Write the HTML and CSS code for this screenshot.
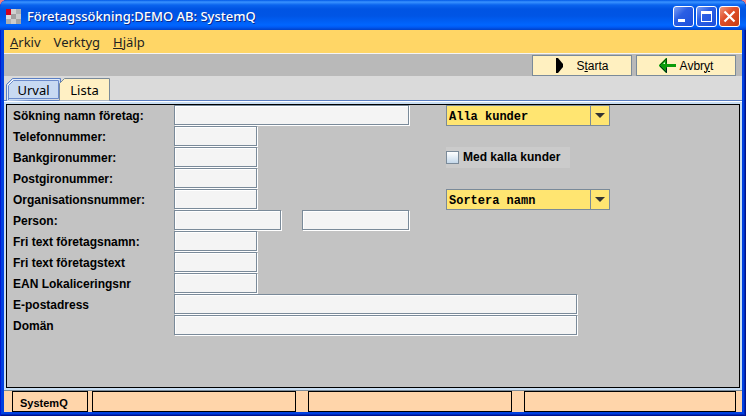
FILE: index.html
```html
<!DOCTYPE html>
<html lang="sv">
<head>
  <meta charset="UTF-8">
  <title>Företagssökning:DEMO AB: SystemQ</title>
  <link rel="stylesheet" href="styles.css">
</head>
<body>
  <div class="window">

    <header class="titlebar">
      <svg class="app-icon" width="15" height="15" viewBox="0 0 15 15" shape-rendering="crispEdges">
        <rect width="15" height="15" fill="#b4b4b4"/>
        <rect x="5" width="5" height="5" fill="#d0d0d0"/>
        <rect x="10" width="5" height="5" fill="#b0b0b0"/>
        <rect y="5" width="5" height="5" fill="#dcdcdc"/>
        <rect x="5" y="5" width="5" height="5" fill="#a0a0a0"/>
        <rect x="10" y="5" width="5" height="5" fill="#c8c8c8"/>
        <rect y="10" width="5" height="5" fill="#b0b0b0"/>
        <rect x="5" y="10" width="5" height="5" fill="#cccccc"/>
        <rect x="10" y="10" width="5" height="5" fill="#a4a4a4"/>
        <rect width="5" height="6" fill="#d00020"/>
      </svg>
      <h1>Företagssökning:DEMO AB: SystemQ</h1>
      <button type="button" class="win-button" aria-label="Minimera">
        <svg width="19" height="19" viewBox="0 0 19 19" shape-rendering="crispEdges"><rect x="4" y="12" width="7" height="3" fill="#fff"/></svg>
      </button>
      <button type="button" class="win-button" aria-label="Maximera">
        <svg width="19" height="19" viewBox="0 0 19 19" shape-rendering="crispEdges"><path d="M4 4h11v11H4zM5 7v7h9V7z" fill="#fff" fill-rule="evenodd"/></svg>
      </button>
      <button type="button" class="win-button close" aria-label="Stäng">
        <svg width="19" height="19" viewBox="0 0 19 19"><path d="M4.500 4.500l10 10M14.500 4.500l-10 10" stroke="#fff" stroke-width="2.2"/></svg>
      </button>
    </header>

    <nav class="menubar">
      <a href="#"><u>A</u>rkiv</a>
      <a href="#">Verktyg</a>
      <a href="#"><u>H</u>jälp</a>
    </nav>

    <div class="toolbar">
      <button type="button" class="tool-button">
        <svg width="17" height="15" viewBox="0 0 17 15"><path d="M1 0h2l5 6v3l-5 6H1z" fill="#000"/></svg>
        <span>S<u>t</u>arta</span>
      </button>
      <button type="button" class="tool-button">
        <svg width="17" height="15" viewBox="0 0 17 15"><path d="M7 0h1v6h9v3H8v6H7L0 8V7z" fill="#0a9b0a"/><path d="M7.500.5v5M7 1L1 7" stroke="#064a06" fill="none"/><path d="M1 8l6.500 6.500V9.500" stroke="#022" fill="none"/><path d="M4 6l2-2v2z" fill="#d8ffd8"/></svg>
        <span>Avbr<u>y</u>t</span>
      </button>
    </div>

    <div class="tabs" role="tablist">
      <button type="button" class="tab active" role="tab">
        <svg width="55" height="23" viewBox="0 0 55 23"><path d="M.5 23V6.500L6.500.5H54.500V21" fill="#c8daf2" stroke="#5b7fc4"/><path d="M2 22V7L7 2H53" fill="none" stroke="#fff"/><path d="M2.500 22V7.500L7.500 2.500H52.500V20.500H2.500" fill="none" stroke="#6b8bcb"/></svg>
        <span>Urval</span>
      </button>
      <button type="button" class="tab" role="tab">
        <svg width="51" height="23" viewBox="0 0 51 23"><path d="M.5 22.500V5.500L5.500.5H50.500V22.500" fill="#fff0c4" stroke="#7a8a99"/></svg>
        <span>Lista</span>
      </button>
    </div>

    <main class="content">
      <form class="search">
        <label for="namn">Sökning namn företag:</label>
        <input type="text" id="namn" class="field medium">
        <div class="combo">
          <select aria-label="Kundurval"><option>Alla kunder</option></select>
          <svg width="10" height="5" viewBox="0 0 10 5"><path d="M0 0h10L5 5z" fill="#333"/></svg>
        </div>

        <label for="telefon">Telefonnummer:</label>
        <input type="text" id="telefon" class="field short">

        <label for="bankgiro">Bankgironummer:</label>
        <input type="text" id="bankgiro" class="field short">
        <label class="check"><input type="checkbox">Med kalla kunder</label>

        <label for="postgiro">Postgironummer:</label>
        <input type="text" id="postgiro" class="field short">

        <label for="orgnr">Organisationsnummer:</label>
        <input type="text" id="orgnr" class="field short">
        <div class="combo">
          <select aria-label="Sortering"><option>Sortera namn</option></select>
          <svg width="10" height="5" viewBox="0 0 10 5"><path d="M0 0h10L5 5z" fill="#333"/></svg>
        </div>

        <label for="person">Person:</label>
        <div class="person">
          <input type="text" id="person" class="field">
          <input type="text" class="field" aria-label="Efternamn">
        </div>

        <label for="fritextnamn">Fri text företagsnamn:</label>
        <input type="text" id="fritextnamn" class="field short">

        <label for="fritext">Fri text företagstext</label>
        <input type="text" id="fritext" class="field short">

        <label for="ean">EAN Lokaliceringsnr</label>
        <input type="text" id="ean" class="field short">

        <label for="epost">E-postadress</label>
        <input type="text" id="epost" class="field long">

        <label for="doman">Domän</label>
        <input type="text" id="doman" class="field long">
      </form>
    </main>

    <footer class="statusbar">
      <div class="status name">SystemQ</div>
      <div class="status"></div>
      <div class="status"></div>
      <div class="status last"></div>
    </footer>

  </div>
</body>
</html>
```
FILE: styles.css
```css
* {
  box-sizing: border-box;
}

body {
  margin: 0;
  background: #f08080;
  font-family: "Liberation Sans", Arial, sans-serif;
  font-size: 12px;
  color: #000;
}

button, input, select {
  margin: 0;
  padding: 0;
  font: inherit;
  color: inherit;
}

.window {
  display: flex;
  flex-direction: column;
  min-height: 100vh;
  padding: 0 4px 4px;
  border-radius: 7px 7px 0 0;
  background: #0040e0;
  box-shadow: inset 1px 0 #0019cf, inset -1px -1px #00138c, inset -2px -2px #0029b8;
}

/* title bar */
.titlebar {
  display: flex;
  align-items: center;
  gap: 2px;
  height: 30px;
  margin: 0 -4px;
  padding: 2px 6px 0;
  border-radius: 7px 7px 0 0;
  background: linear-gradient(#0058e6 0, #3a93ff 2px, #0a64ee 5px, #0054e3 9px, #0055e5 16px, #0066ff 25px, #005bf5 27px, #0040c8 30px);
}

.titlebar h1 {
  flex: 1;
  margin: 0 0 0 4px;
  font-family: "Noto Sans", sans-serif;
  font-size: 13px;
  font-weight: 500;
  line-height: 20px;
  color: #fff;
  text-shadow: 1px 1px #0a2a8c;
}

.win-button {
  width: 21px;
  height: 21px;
  border: 1px solid #fff;
  border-radius: 3px;
  background: linear-gradient(135deg, #7c9ff4, #2a5ee4 40%, #1c4fdc);
}

.win-button svg {
  display: block;
}

.win-button.close {
  background: linear-gradient(135deg, #f0987c, #e0502c 40%, #c83c10);
}

/* menu */
.menubar {
  display: flex;
  gap: 13px;
  height: 24px;
  padding-left: 6px;
  border-bottom: 1px solid #f4f4f4;
  background: #ffd666;
  font-family: "Noto Sans", sans-serif;
  font-size: 13px;
  line-height: 24px;
}

.menubar a {
  color: #222;
  text-decoration: none;
}

/* toolbar */
.toolbar {
  display: flex;
  justify-content: flex-end;
  gap: 4px;
  height: 22px;
  padding: 1px 6px 0 0;
  background: #b9b9b9;
}

.tool-button {
  display: flex;
  align-items: center;
  justify-content: center;
  gap: 4px;
  width: 100px;
  height: 21px;
  border: 1px solid #7a8a99;
  background: #fff0c0;
}

/* tabs */
.tabs {
  display: flex;
  height: 25px;
  padding: 2px 0 0 2px;
  border-bottom: 1px solid #5b7fc4;
  background: #dadada;
}

.tab {
  display: grid;
  place-items: center;
  border: 0;
  background: none;
  font-family: "Noto Sans", sans-serif;
  font-size: 13px;
}

.tab svg, .tab span {
  grid-area: 1 / 1;
}

.tab + .tab {
  margin-left: -2px;
}

.tab svg {
  display: block;
}

/* search form */
.content {
  display: flex;
  flex: 1;
  padding: 2px;
  border-top: 1px solid #fff;
  border-bottom: 1px solid #7a8a99;
  background: #c8ddf2;
}

.search {
  display: grid;
  flex: 1;
  grid-template-columns: 161px 272px 1fr;
  grid-auto-rows: 21px;
  border: 1px solid #000;
  padding-left: 6px;
  background: #c3c3c3;
  font-weight: bold;
}

.search > label {
  grid-column: 1;
  line-height: 23px;
}

.field {
  width: 100%;
  height: 20px;
  padding: 0 4px;
  border: 1px solid #7a8a99;
  border-radius: 0;
  background: #f4f4f4;
  box-shadow: inset 1px 1px #fff, 1px 1px #fff;
}

.field.short {
  width: 83px;
}

.field.medium {
  width: 235px;
}

.field.long {
  grid-column: 2 / 4;
  width: 403px;
}

.person {
  display: flex;
  gap: 21px;
  width: 235px;
}

.combo {
  position: relative;
  grid-column: 3;
  width: 164px;
}

.combo select {
  display: block;
  width: 100%;
  height: 21px;
  padding: 2px 0 0 2px;
  border: 1px solid #7a8a99;
  border-radius: 0;
  background: linear-gradient(#7a8a99, #7a8a99) 143px 0 / 1px 100% no-repeat #ffe571;
  appearance: none;
  font-family: "Liberation Mono", monospace;
  font-size: 12px;
  font-weight: bold;
}

.combo svg {
  position: absolute;
  top: 8px;
  right: 5px;
  pointer-events: none;
}

.search > .check {
  display: flex;
  grid-column: 3;
  align-items: center;
  gap: 4px;
  width: 124px;
  background: #cbcbcb;
}

.check input {
  width: 13px;
  height: 13px;
  border: 1px solid #7a8a99;
  background: linear-gradient(#fff, #c4d8ea);
  appearance: none;
}

/* status bar */
.statusbar {
  display: flex;
  gap: 12px;
  height: 21px;
  padding: 0 6px 0 8px;
  background: #ffd5aa;
}

.status {
  flex: 204 1 0;
  border: 1px solid #000;
}

.status.name {
  flex: none;
  width: 76px;
  margin-right: -8px;
  padding-left: 7px;
  font-size: 11px;
  font-weight: bold;
  line-height: 23px;
}

.status.last {
  flex-grow: 212;
}
```
